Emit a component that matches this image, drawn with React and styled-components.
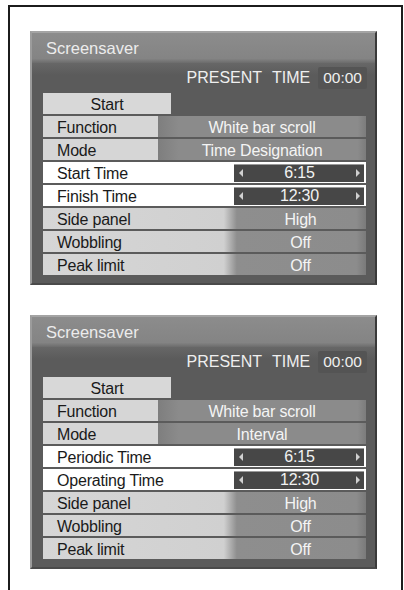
import styled, { createGlobalStyle } from "styled-components";

const GlobalStyle = createGlobalStyle`
  html, body {
    margin: 0;
    padding: 0;
    background: #fff;
    overflow: hidden;
  }
  body {
    font-family: "Liberation Sans", Arial, sans-serif;
  }
`;

const panels = [
  {
    mode: "Time Designation",
    first: "Start Time",
    second: "Finish Time",
  },
  {
    mode: "Interval",
    first: "Periodic Time",
    second: "Operating Time",
  },
];

const Screensaver = ({ mode, first, second }) => {
  return (
    <Panel>
      <TitleBar>Screensaver</TitleBar>
      <PresentRow>
        <span>PRESENT TIME</span>
        <Clock>00:00</Clock>
      </PresentRow>
      <Rows>
        <Row>
          <StartButton>Start</StartButton>
        </Row>
        <Row>
          <Label $width={115}>Function</Label>
          <Value>White bar scroll</Value>
        </Row>
        <Row>
          <Label $width={115}>Mode</Label>
          <Value>{mode}</Value>
        </Row>
        <TimeRow>
          <Label $width={191} $white>{first}</Label>
          <TimeBox>
            <Arrow />
            <span>6:15</span>
            <Arrow $right />
          </TimeBox>
        </TimeRow>
        <TimeRow>
          <Label $width={191} $white>{second}</Label>
          <TimeBox>
            <Arrow />
            <span>12:30</span>
            <Arrow $right />
          </TimeBox>
        </TimeRow>
        <SettingRow>
          <Label $width={192} $fade>Side panel</Label>
          <Value $fade>High</Value>
        </SettingRow>
        <SettingRow>
          <Label $width={192} $fade>Wobbling</Label>
          <Value $fade>Off</Value>
        </SettingRow>
        <SettingRow>
          <Label $width={192} $fade>Peak limit</Label>
          <Value $fade>Off</Value>
        </SettingRow>
      </Rows>
    </Panel>
  );
};

const App = () => {
  return (
    <>
      <GlobalStyle />
      <Frame>
        {panels.map((p) => (
          <Screensaver key={p.first} {...p} />
        ))}
      </Frame>
    </>
  );
};

const Frame = styled.div`
  box-sizing: border-box;
  margin: 5px 0 0 8px;
  width: 395px;
  height: 585px;
  border: 2px solid #1c1c1c;
  border-bottom: none;
  padding: 24px 23px 0 20px;
  display: flex;
  flex-direction: column;
  gap: 30px;
`;

const Panel = styled.div`
  box-sizing: border-box;
  width: 347px;
  background: #5b5b5b;
  border-style: solid;
  border-width: 2px;
  border-color: #a4a4a4 #3a3a3a #4a4a4a #9c9c9c;
  padding-bottom: 8px;
`;

const TitleBar = styled.div`
  height: 30px;
  padding-left: 14px;
  display: flex;
  align-items: center;
  padding-top: 1px;
  box-sizing: border-box;
  font-size: 16.5px;
  color: #ececec;
  background: linear-gradient(to bottom, #8c8c8c 0%, #848484 85%, #6c6c6c 100%);
`;

const PresentRow = styled.div`
  height: 30px;
  display: flex;
  align-items: center;
  justify-content: flex-end;
  gap: 8px;
  padding-right: 8px;
  font-size: 16px;
  word-spacing: 6px;
  color: #efefef;
  background: linear-gradient(to bottom, #676767 0%, #5b5b5b 40%);
`;

const Clock = styled.span`
  background: #545454;
  padding: 2px 5px;
  border-radius: 2px;
  font-size: 15.5px;
`;

const Rows = styled.div`
  display: flex;
  flex-direction: column;
  gap: 2px;
  padding: 0 9px 0 11px;
`;

const Row = styled.div`
  height: 21px;
  display: flex;
  font-size: 16px;
  letter-spacing: -0.2px;
  line-height: 21px;
`;

const TimeRow = styled(Row)`
  background: #fff;
  align-items: center;
  padding-right: 2px;
`;

const SettingRow = styled(Row)`
  background: linear-gradient(
    to right,
    #d6d6d6 0%,
    #d0d0d0 56%,
    #8e8e8e 60%,
    #8c8c8c 97%,
    #7a7a7a 100%
  );
`;

const StartButton = styled.div`
  width: 128px;
  background: #d8d8d8;
  color: #1a1a1a;
  text-align: center;
  padding-top: 1px;
`;

const Label = styled.div`
  width: ${(p) => p.$width}px;
  flex-shrink: 0;
  box-sizing: border-box;
  padding: 1px 0 0 14px;
  color: #1a1a1a;
  background: ${(p) => (p.$white || p.$fade ? "transparent" : "#d6d6d6")};
`;

const Value = styled.div`
  flex: 1;
  text-align: center;
  padding-top: 1px;
  color: #f4f4f4;
  background: ${(p) =>
    p.$fade
      ? "transparent"
      : "linear-gradient(to right, #7e7e7e, #8b8b8b 10%, #8b8b8b 96%, #7c7c7c)"};
`;

const TimeBox = styled.div`
  flex: 1;
  height: 18px;
  display: flex;
  align-items: center;
  justify-content: space-between;
  padding: 0 4px 0 5px;
  background: #474747;
  box-shadow: inset 0 1px 0 #9a9a9a;
  color: #f2f2f2;
  line-height: 18px;
  span {
    padding-top: 1px;
  }
`;

const Arrow = styled.i`
  width: 0;
  height: 0;
  border-top: 4px solid transparent;
  border-bottom: 4px solid transparent;
  ${(p) =>
    p.$right
      ? "border-left: 4px solid #d0d0d0;"
      : "border-right: 4px solid #d0d0d0;"}
`;

export default App;
